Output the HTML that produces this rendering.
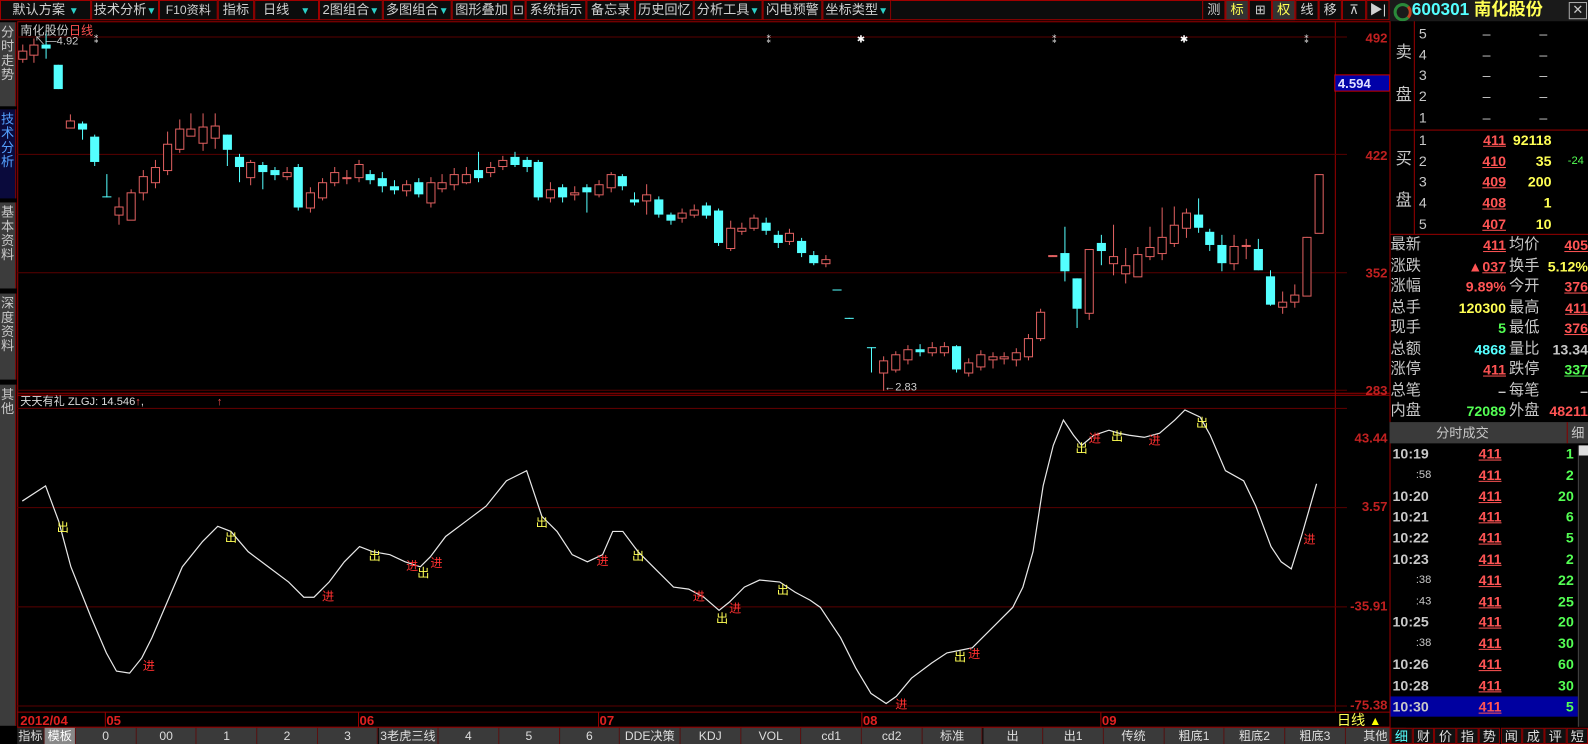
<!DOCTYPE html>
<html><head><meta charset="utf-8"><style>
html,body{margin:0;padding:0;background:#000;width:1588px;height:744px;overflow:hidden}
#w{position:absolute;left:0;top:0;width:1568px;height:735px;transform:scale(1.01276,1.01224);transform-origin:0 0;font-family:"Liberation Sans","Noto Sans CJK SC",sans-serif;color:#c8c8c8}
.a{position:absolute;white-space:nowrap}
.tb{position:absolute;top:0;height:20px;border:1px solid #a00000;box-sizing:border-box;background:#0c0c0c;font-size:13px;line-height:18px;text-align:center;color:#d0d0d0;white-space:nowrap;overflow:hidden}
.tri{color:#2bd0c8;font-size:10px}
.lt{position:absolute;left:0;width:16px;background:#3c3c3c;border-right:1px solid #800;font-size:13px;line-height:14px;text-align:center;color:#c8c8c8;box-sizing:border-box;padding-top:3px}
.bt{position:absolute;top:719px;height:16px;background:#3a3a3a;border-right:1px solid #5a1010;font-size:12px;line-height:16px;text-align:center;color:#ddd;box-sizing:border-box;white-space:nowrap;overflow:hidden}
.r{color:#ff5454}.y{color:#ffff54}.g{color:#54ff54}.c{color:#54ffff}
u{text-decoration:underline}
.rp{position:absolute;font-size:14px;line-height:20px;white-space:nowrap}
</style></head><body><div id="w">
<div class="tb" style="left:0;width:90px">默认方案 <span class="tri">▼</span></div>
<div class="tb" style="left:90px;width:67px">技术分析<span class="tri">▼</span></div>
<div class="tb" style="left:157px;width:58px;font-size:12px">F10资料</div>
<div class="tb" style="left:215px;width:36px">指标</div>
<div class="tb" style="left:251px;width:64px">日线 &nbsp; <span class="tri">▼</span></div>
<div class="tb" style="left:315px;width:63px">2图组合<span class="tri">▼</span></div>
<div class="tb" style="left:378px;width:68px">多图组合<span class="tri">▼</span></div>
<div class="tb" style="left:446px;width:59px">图形叠加</div>
<div class="tb" style="left:505px;width:14px">⊡</div>
<div class="tb" style="left:519px;width:60px">系统指示</div>
<div class="tb" style="left:579px;width:48px">备忘录</div>
<div class="tb" style="left:627px;width:58px">历史回忆</div>
<div class="tb" style="left:685px;width:68px">分析工具<span class="tri">▼</span></div>
<div class="tb" style="left:753px;width:59px">闪电预警</div>
<div class="tb" style="left:812px;width:68px">坐标类型<span class="tri">▼</span></div>
<div class="tb" style="left:880px;width:307px;border-left:none;border-right:none"></div>
<div class="tb" style="left:1187px;width:23px">测</div>
<div class="tb" style="left:1210px;width:23px;background:#333;color:#ffff54">标</div>
<div class="tb" style="left:1233px;width:23px">⊞</div>
<div class="tb" style="left:1256px;width:23px;background:#333;color:#ffff54">权</div>
<div class="tb" style="left:1279px;width:23px">线</div>
<div class="tb" style="left:1302px;width:23px">移</div>
<div class="tb" style="left:1325px;width:24px">⊼</div>
<div class="tb" style="left:1349px;width:23px">▶|</div>
<div class="a" style="left:1372px;top:0;width:196px;height:21px;background:#1a1a1a"></div>
<div class="a" style="left:1376px;top:3px;width:18px;height:18px;border-radius:50%;border:3px solid #2a8a3a;border-right-color:#c04020;box-sizing:border-box"></div>
<div class="a" style="left:1394px;top:0;font-size:17px;font-weight:bold;line-height:20px"><span class="c">600301</span> <span class="y">南化股份</span></div>
<div class="a" style="left:1549px;top:2px;width:16px;height:15px;border:1px solid #aaa;font-size:13px;line-height:14px;text-align:center">✕</div>

<div class="lt" style="top:22px;height:83px">分<br>时<br>走<br>势</div>
<div class="lt" style="top:108px;height:88px;background:#0a0a3c;color:#54a0ff">技<br>术<br>分<br>析</div>
<div class="lt" style="top:200px;height:85px">基<br>本<br>资<br>料</div>
<div class="lt" style="top:290px;height:85px">深<br>度<br>资<br>料</div>
<div class="lt" style="top:380px;height:337px">其<br>他</div>

<svg class="a" style="left:0;top:0" width="1568" height="735" id="sv">
<g stroke="#900" fill="none" stroke-width="1">
<rect x="17.5" y="21.5" width="1355" height="697"/>
<line x1="1318.5" y1="21" x2="1318.5" y2="703"/>
<line x1="17" y1="388.5" x2="1372" y2="388.5"/>
<line x1="17" y1="390.5" x2="1372" y2="390.5"/>
<line x1="17" y1="703.5" x2="1372" y2="703.5"/>
<line x1="17" y1="718.5" x2="1372" y2="718.5"/>
</g>
<g stroke="#5a0000" stroke-width="1">
<line x1="17" y1="36.5" x2="1330" y2="36.5"/><line x1="17" y1="152.5" x2="1330" y2="152.5"/><line x1="17" y1="269.5" x2="1330" y2="269.5"/><line x1="17" y1="385.5" x2="1330" y2="385.5"/>
<line x1="17" y1="403.5" x2="1330" y2="403.5"/><line x1="17" y1="501.5" x2="1330" y2="501.5"/><line x1="17" y1="599.5" x2="1330" y2="599.5"/><line x1="17" y1="697.5" x2="1330" y2="697.5"/>
</g>
<g id="cd"></g>
<polyline fill="none" stroke="#e8e8e8" stroke-width="1.2" points="22,495 45,480 58,515 70,560 90,610 105,645 115,663 128,665 140,650 150,630 165,595 180,560 200,535 215,520 228,525 245,545 265,560 285,575 300,590 310,590 325,575 340,555 355,540 368,545 385,548 400,555 415,560 425,550 440,530 460,515 480,500 500,475 520,465 535,510 550,525 565,548 580,555 595,548 605,525 615,525 630,545 650,565 665,580 680,582 695,590 710,603 720,595 735,580 750,573 770,575 785,585 800,593 810,600 820,615 830,630 845,660 860,685 875,695 885,688 900,670 920,655 935,645 950,642 960,640 970,630 985,615 1000,600 1010,580 1020,545 1030,480 1040,440 1050,415 1060,430 1068,440 1080,430 1095,425 1105,428 1115,430 1130,432 1145,428 1160,415 1170,405 1185,412 1195,430 1210,465 1228,475 1240,500 1255,540 1265,555 1275,562 1285,530 1300,478"/>
<g font-size="12" fill="#ffff54" font-family="Liberation Sans,Noto Sans CJK SC,sans-serif">
<text x="56" y="525">出</text><text x="222" y="535">出</text><text x="364" y="553">出</text><text x="412" y="570">出</text><text x="529" y="520">出</text><text x="624" y="553">出</text><text x="707" y="615">出</text><text x="767" y="587">出</text><text x="942" y="653">出</text><text x="1062" y="447">出</text><text x="1097" y="435">出</text><text x="1181" y="422">出</text>
</g>
<g font-size="12" fill="#ff3030" font-family="Liberation Sans,Noto Sans CJK SC,sans-serif">
<text x="141" y="662">进</text><text x="318" y="593">进</text><text x="401" y="563">进</text><text x="425" y="560">进</text><text x="589" y="558">进</text><text x="684" y="593">进</text><text x="720" y="605">进</text><text x="884" y="700">进</text><text x="956" y="650">进</text><text x="1075" y="437">进</text><text x="1134" y="439">进</text><text x="1287" y="537">进</text>
</g>
<g font-size="12" font-family="Liberation Sans,Noto Sans CJK SC,sans-serif">
<text x="20" y="34" fill="#ccc">南化股份<tspan fill="#ff5050">日线</tspan></text>
<text x="34" y="44" fill="#ccc" font-size="11">↖—4.92</text>
<text x="873" y="386" fill="#ccc" font-size="11">←2.83</text>
<text x="20" y="400" fill="#ddd" font-size="11">天天有礼 ZLGJ: 14.546<tspan fill="#ff5050">↑</tspan>,</text>
<text x="214" y="400" fill="#ff5050" font-size="11">↑</text>
<g fill="#fff" font-size="10"><text x="90" y="42">⁑</text><text x="754" y="42">⁑</text><text x="846" y="42">✱</text><text x="1036" y="42">⁑</text><text x="1165" y="42">✱</text><text x="1285" y="42">⁑</text></g>
<g fill="#c02020" font-size="13" font-weight="bold" text-anchor="end">
<text x="1370" y="42">492</text><text x="1370" y="158">422</text><text x="1370" y="274">352</text><text x="1370" y="390">283</text>
<text x="1370" y="437">43.44</text><text x="1370" y="505">3.57</text><text x="1370" y="603">-35.91</text><text x="1370" y="701">-75.38</text>
</g>
<rect x="1318" y="74" width="54" height="16" fill="#0000a8" stroke="#c00"/>
<text x="1321" y="87" fill="#e0e0ff" font-size="13" font-weight="bold">4.594</text>
<g fill="#e02020" font-size="13" font-weight="bold">
<text x="20" y="716">2012/04</text><text x="105" y="716">05</text><text x="355" y="716">06</text><text x="592" y="716">07</text><text x="852" y="716">08</text><text x="1088" y="716">09</text>
</g>
<g stroke="#900"><line x1="104" y1="704" x2="104" y2="718"/><line x1="354" y1="704" x2="354" y2="718"/><line x1="591" y1="704" x2="591" y2="718"/><line x1="851" y1="704" x2="851" y2="718"/><line x1="1087" y1="704" x2="1087" y2="718"/></g>
<text x="1320" y="716" fill="#ffff54" font-size="14">日线</text><text x="1352" y="716" fill="#ffff00" font-size="12">▲</text>
</g>
</svg>

<div class="bt" style="left:17px;width:27px;background:#222">指标</div>
<div class="bt" style="left:44px;width:31px;background:#888;color:#fff">模板</div>
<div id="btabs"></div>

<div class="a" style="left:1372px;top:21px;width:196px;height:714px;border-left:1px solid #900;box-sizing:border-box"></div>
<div class="a" style="left:1372px;top:128px;width:196px;border-top:1px solid #900"></div>
<div class="a" style="left:1372px;top:231px;width:196px;border-top:1px solid #900"></div>
<div class="a" style="left:1396px;top:21px;height:210px;border-left:1px solid #900"></div>
<div class="rp" style="left:1378px;top:43px;font-size:16px">卖</div>
<div class="rp" style="left:1378px;top:85px;font-size:16px">盘</div>
<div class="rp" style="left:1378px;top:148px;font-size:16px">买</div>
<div class="rp" style="left:1378px;top:189px;font-size:16px">盘</div>
<div id="ob"></div>
<div id="st"></div>
<div class="a" style="left:1372px;top:417px;width:196px;height:21px;background:#3a3a3a;font-size:13px;line-height:21px"><span style="position:absolute;left:46px">分时成交</span><span style="position:absolute;right:0;width:20px;border-left:1px solid #800;text-align:center">细</span></div>
<div id="tr"></div>
<div class="a" style="left:1558px;top:440px;width:10px;height:278px;background:#111;border-left:1px solid #444"></div>
<div class="a" style="left:1559px;top:440px;width:9px;height:10px;background:#ddd"></div>
<div id="rt"></div>
</div>
<script>
var cs=[[22,50,58,44,62,'r'],[33,44,54,38,62,'r'],[45,44,48,30,58,'c'],[57,64,88,64,88,'c'],[69,119,126,113,126,'r'],[81,122,128,120,138,'c'],[93,135,160,133,164,'c'],[105,194,195,172,195,'c'],[117,204,212,195,222,'r'],[129,190,217,187,217,'r'],[141,174,190,168,198,'r'],[153,165,180,158,186,'r'],[165,142,168,130,173,'r'],[177,127,147,118,151,'r'],[188,127,134,112,134,'r'],[200,125,141,112,149,'r'],[212,124,136,112,147,'r'],[224,133,148,133,164,'c'],[236,155,165,152,180,'c'],[247,160,175,158,183,'r'],[259,163,170,160,187,'c'],[271,168,173,165,178,'c'],[283,170,174,165,178,'r'],[294,165,205,162,208,'c'],[306,190,205,185,210,'r'],[318,180,195,176,198,'r'],[330,170,180,165,184,'r'],[342,175,176,168,182,'r'],[354,162,175,158,180,'r'],[365,172,178,168,182,'c'],[377,176,184,170,190,'c'],[389,184,188,178,192,'c'],[401,182,188,178,194,'r'],[413,180,192,176,195,'c'],[425,180,200,175,205,'r'],[436,180,186,172,190,'r'],[448,172,182,166,188,'r'],[460,172,180,165,182,'r'],[472,168,176,150,180,'c'],[484,165,170,160,175,'r'],[496,158,164,154,168,'r'],[508,155,163,150,165,'c'],[520,158,165,155,170,'c'],[531,160,195,158,198,'c'],[543,187,195,180,200,'r'],[555,185,195,182,200,'c'],[567,190,192,184,198,'r'],[579,185,190,182,210,'c'],[591,182,192,178,195,'r'],[603,172,185,170,190,'r'],[614,174,184,172,188,'c'],[626,197,200,190,203,'c'],[638,192,198,182,212,'r'],[650,197,212,194,215,'c'],[662,212,218,210,222,'c'],[673,210,215,206,220,'r'],[685,207,212,202,215,'r'],[697,203,213,200,216,'c'],[709,208,240,206,243,'c'],[721,225,245,218,248,'r'],[732,225,228,220,232,'r'],[744,215,225,212,228,'r'],[756,220,228,215,232,'c'],[768,232,240,228,245,'c'],[779,230,238,226,242,'r'],[791,238,250,235,254,'c'],[803,252,260,248,262,'c'],[815,256,260,252,264,'r'],[826,286,287,286,287,'c'],[838,314,315,314,315,'c'],[860,343,344,343,368,'c'],[872,356,368,352,386,'r'],[884,350,365,347,368,'r'],[896,345,355,341,360,'r'],[908,345,348,340,352,'c'],[920,343,348,338,352,'r'],[932,342,348,338,352,'r'],[944,342,365,341,368,'c'],[956,358,368,354,372,'r'],[968,350,362,346,366,'r'],[980,352,355,348,364,'r'],[991,352,354,348,360,'r'],[1003,348,355,344,362,'r'],[1015,334,352,330,356,'r'],[1027,308,334,305,337,'r'],[1039,252,253,252,253,'r'],[1051,250,268,224,278,'c'],[1063,275,305,275,324,'c'],[1075,246,309,246,316,'r'],[1087,240,248,232,262,'c'],[1099,253,260,222,272,'r'],[1111,262,270,245,280,'r'],[1123,251,273,244,273,'r'],[1135,244,253,224,257,'r'],[1147,234,250,205,257,'r'],[1159,222,240,204,244,'r'],[1171,210,225,206,235,'r'],[1183,212,225,196,230,'c'],[1194,229,242,226,248,'c'],[1206,242,260,232,268,'c'],[1218,243,260,232,267,'r'],[1230,242,243,236,256,'r'],[1242,246,267,236,267,'c'],[1254,273,301,267,302,'c'],[1266,298,303,288,310,'r'],[1278,291,298,281,304,'r'],[1290,234,292,234,292,'r'],[1302,172,230,172,230,'r']];
var h='';cs.forEach(function(c){var col=c[5]=='r'?'#e06060':'#54ffff';var x=c[0];
h+='<line x1="'+(x+.5)+'" y1="'+c[3]+'" x2="'+(x+.5)+'" y2="'+c[4]+'" stroke="'+col+'"/>';
var hh=Math.max(1,c[2]-c[1]);
if(c[5]=='r')h+='<rect x="'+(x-3.5)+'" y="'+(c[1]+.5)+'" width="8" height="'+hh+'" fill="#000" stroke="'+col+'"/>';
else h+='<rect x="'+(x-4)+'" y="'+c[1]+'" width="9" height="'+hh+'" fill="'+col+'"/>';});
document.getElementById('cd').innerHTML=h;
var tabs=['0','00','1','2','3','3老虎三线','4','5','6','DDE决策','KDJ','VOL','cd1','cd2','标准','出','出1','传统','粗底1','粗底2','粗底3','其他'];
var s='';tabs.forEach(function(t,i){s+='<div class="bt" style="left:'+(75+i*59.7)+'px;width:59.7px">'+t+'</div>';});
document.getElementById('btabs').innerHTML=s;
var ob='';for(var i=0;i<5;i++){var y=23+i*20.7;ob+='<div class="rp" style="left:1401px;top:'+y+'px">'+(5-i)+'</div><div class="rp" style="left:1464px;top:'+y+'px">–</div><div class="rp" style="left:1520px;top:'+y+'px">–</div>';}
var bp=[['411','92118'],['410','35'],['409','200'],['408','1'],['407','10']];
bp.forEach(function(b,i){var y=128+i*20.7;ob+='<div class="rp" style="left:1401px;top:'+y+'px">'+(i+1)+'</div><div class="rp r" style="left:1443px;top:'+y+'px;width:44px;text-align:right;font-weight:bold"><u>'+b[0]+'</u></div><div class="rp y" style="left:1490px;top:'+y+'px;width:42px;text-align:right;font-weight:bold">'+b[1]+'</div>';});
ob+='<div class="rp g" style="left:1548px;top:149px;font-size:11px">-24</div>';
document.getElementById('ob').innerHTML=ob;
var st=[['最新','r','<u>411</u>','均价','r','<u>405</u>'],['涨跌','r','▲<u>037</u>','换手','y','5.12%'],['涨幅','r','9.89%','今开','r','<u>376</u>'],['总手','y','120300','最高','r','<u>411</u>'],['现手','g','5','最低','r','<u>376</u>'],['总额','c','4868','量比','','13.34'],['涨停','r','<u>411</u>','跌停','g','<u>337</u>'],['总笔','','–','每笔','','–'],['内盘','g','72089','外盘','r','48211']];
var q='';st.forEach(function(r,i){var y=232+i*20.5;q+='<div class="rp" style="left:1373px;top:'+y+'px;font-size:15px">'+r[0]+'</div><div class="rp '+r[1]+'" style="left:1405px;top:'+y+'px;width:82px;text-align:right;font-weight:bold">'+r[2]+'</div><div class="rp" style="left:1490px;top:'+y+'px;font-size:15px">'+r[3]+'</div><div class="rp '+r[4]+'" style="left:1524px;top:'+y+'px;width:44px;text-align:right;font-weight:bold;overflow:hidden;direction:rtl">'+r[5]+'</div>';});
document.getElementById('st').innerHTML=q;
var tm=['10:19',':58','10:20','10:21','10:22','10:23',':38',':43','10:25',':38','10:26','10:28','10:30'];var vv=['1','2','20','6','5','2','22','25','20','30','60','30','5'];
var t='';tm.forEach(function(m,i){var y=438+i*20.8;var bg=i==12?'background:#0000a0;':'';t+='<div class="a" style="left:1373px;top:'+y+'px;width:185px;height:20px;'+bg+'"></div><div class="rp" style="left:'+(m.length<4?1398:1375)+'px;top:'+y+'px;font-weight:bold;'+(m.length<4?'font-size:11px;font-weight:normal':'')+'">'+m+'</div><div class="rp r" style="left:1460px;top:'+y+'px;font-weight:bold"><u>411</u></div><div class="rp g" style="left:1520px;top:'+y+'px;width:34px;text-align:right;font-weight:bold">'+vv[i]+'</div>';});
document.getElementById('tr').innerHTML=t;
var rt=['细','财','价','指','势','闻','成','评','短'];var u='';rt.forEach(function(x,i){u+='<div class="bt" style="left:'+(1373+i*21.7)+'px;width:21.7px;background:#111;border:1px solid #800;font-size:13px;'+(i==0?'color:#54ffff':'')+'">'+x+'</div>';});
document.getElementById('rt').innerHTML=u;
</script>
</body></html>
